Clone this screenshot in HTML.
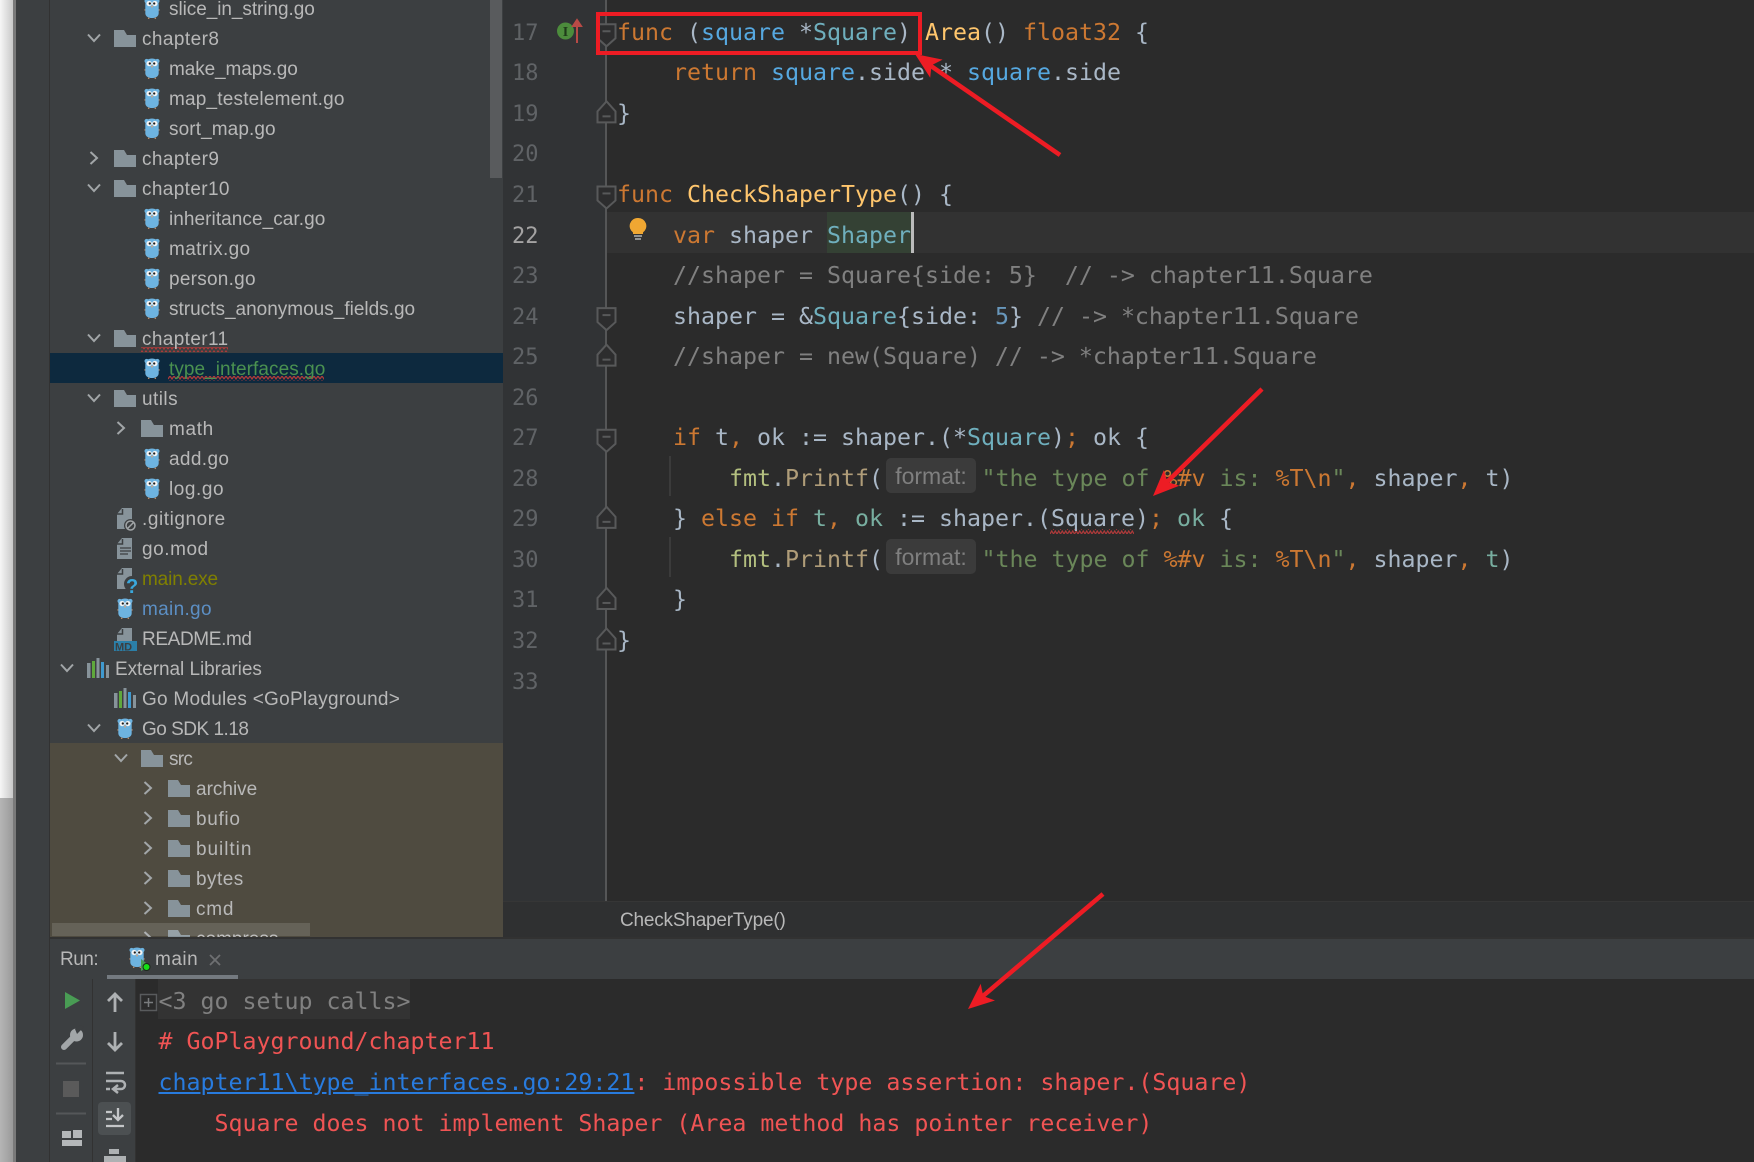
<!DOCTYPE html>
<html><head><meta charset="utf-8"><title>GoLand</title>
<style>
html,body{margin:0;padding:0;width:1754px;height:1162px;overflow:hidden;background:#2b2b2b}
.a{position:absolute}
#side{position:absolute;left:50px;top:0;width:453px;height:937px;background:#3c3f41;overflow:hidden}
.r{position:absolute;height:30px;margin-top:2px;font:19px/30px "Liberation Sans",sans-serif;color:#b8b8b8;white-space:pre}
pre{position:absolute;margin:3.5px 0 0;font:23.25px/40.55px "DejaVu Sans Mono","Liberation Mono",monospace;color:#a9b7c6;white-space:pre}
.ln{color:#606366;left:512px;font-size:22px;margin-top:4.5px}
.cd{left:617px}
.k{color:#cc7832}.f{color:#ffc66d}.v{color:#56a8e0}.y{color:#6fafbd}.s{color:#6a8759}.c{color:#808080}.n{color:#6897bb}.g{color:#b3bf7f}.p{color:#b09d79}.t{color:#78aea0}
.inl{position:absolute;left:886px;width:90px;height:35px;background:#3b3b3b;border-radius:5px;color:#7f7f7f;font:23px/37px "Liberation Sans",sans-serif;text-align:center}
.con{left:158.5px}
.rd{color:#f05454}
.lk{color:#287bde;text-decoration:underline}
</style></head><body>

<!-- left desktop edge -->
<div class="a" style="left:0;top:0;width:13px;height:798px;background:linear-gradient(90deg,#f6f6f6,#c9c9c9)"></div>
<div class="a" style="left:0;top:798px;width:13px;height:364px;background:linear-gradient(90deg,#b5b5b5,#9a9a9a)"></div>
<div class="a" style="left:13px;top:0;width:3px;height:1162px;background:#7a7a7a"></div>
<div class="a" style="left:16px;top:0;width:34px;height:1162px;background:#3c3f41"></div>
<div class="a" style="left:49px;top:0;width:1px;height:1162px;background:#323232"></div>

<!-- gutter + editor backgrounds -->
<div class="a" style="left:503px;top:0;width:103px;height:902px;background:#313335"></div>
<div class="a" style="left:606px;top:0;width:1148px;height:902px;background:#2b2b2b"></div>
<div class="a" style="left:606px;top:212px;width:1148px;height:41px;background:#323232"></div>
<div class="a" style="left:827px;top:212px;width:84px;height:41px;background:#344134"></div>
<div class="a" style="left:911px;top:212px;width:2.5px;height:41px;background:#bbbbbb"></div>
<div class="a" style="left:669px;top:456px;width:1.5px;height:40px;background:#3b3b3b"></div>
<div class="a" style="left:669px;top:537px;width:1.5px;height:40px;background:#3b3b3b"></div>

<!-- sidebar -->
<div id="side">
<div class="a" style="left:0;top:353px;width:453px;height:30px;background:#0d293e"></div>
<div class="a" style="left:0;top:743px;width:453px;height:194px;background:#4f4b40"></div>
<div class="a" style="left:440px;top:0;width:12px;height:178px;background:#595b5d"></div>
<svg class="a" style="left:-50px;top:0" width="503" height="937" viewBox="0 0 503 937">
<defs>
<symbol id="go" viewBox="0 0 16 22" overflow="visible">
<circle cx="2.400" cy="3.200" r="2.300" fill="#6db3e0"/><circle cx="13.600" cy="3.200" r="2.300" fill="#6db3e0"/>
<path d="M0 12.500h2M14 12.500h2M4.500 20.500v1.500M11.500 20.500v1.500" stroke="#b58a6a" stroke-width="1.500"/>
<path d="M1 6.500C1 2.500 4.500 .5 8 .5s7 2 7 6V16c0 3.500-3.500 5-7 5s-7-1.500-7-5z" fill="#6db3e0"/>
<circle cx="5" cy="5.800" r="2.800" fill="#f4f4f4"/><circle cx="11" cy="5.800" r="2.800" fill="#f4f4f4"/>
<circle cx="5.700" cy="5.800" r="1.200" fill="#1c1c1c"/><circle cx="10.300" cy="5.800" r="1.200" fill="#1c1c1c"/>
<rect x="7" y="8" width="2" height="1.800" fill="#c9a58a"/>
</symbol>
<g id="fd"><path d="M0 0h10l3 5h9v12H0z" fill="#87939a"/></g>
<g id="cd"><path d="M-6-3.500L0 3l6-6.500" fill="none" stroke="#a2a6a8" stroke-width="2"/></g>
<g id="cr"><path d="M-3.500-6L3 0l-6.500 6" fill="none" stroke="#a2a6a8" stroke-width="2"/></g>
<g id="fl"><path d="M5 0h10v21H0V6z" fill="#87939a"/><path d="M5.500 1v5H0" fill="none" stroke="#3c3f41" stroke-width="1.500"/></g>
<g id="lb"><rect x="0" y="5" width="3.500" height="15" fill="#87939a"/><rect x="5" y="3" width="3" height="17" fill="#5fa83c"/><rect x="9.500" y="0" width="3" height="20" fill="#87939a"/><rect x="14" y="4" width="3" height="16" fill="#3f9ad0"/><rect x="19" y="7" width="3" height="13" fill="#87939a"/></g>
<pattern id="wv" width="8" height="5" patternUnits="userSpaceOnUse"><path d="M0 4L2 1L4 4L6 1L8 4" fill="none" stroke="#b03a3a" stroke-width="1.200"/></pattern>
</defs>
<use href="#go" x="144" y="-2" width="16" height="21"/>
<use href="#cd" x="94" y="38"/><use href="#fd" x="114" y="30"/>
<use href="#go" x="144" y="58" width="16" height="21"/>
<use href="#go" x="144" y="88" width="16" height="21"/>
<use href="#go" x="144" y="118" width="16" height="21"/>
<use href="#cr" x="94" y="158"/><use href="#fd" x="114" y="150"/>
<use href="#cd" x="94" y="188"/><use href="#fd" x="114" y="180"/>
<use href="#go" x="144" y="208" width="16" height="21"/>
<use href="#go" x="144" y="238" width="16" height="21"/>
<use href="#go" x="144" y="268" width="16" height="21"/>
<use href="#go" x="144" y="298" width="16" height="21"/>
<use href="#cd" x="94" y="338"/><use href="#fd" x="114" y="330"/>
<use href="#go" x="144" y="358" width="16" height="21"/>
<use href="#cd" x="94" y="398"/><use href="#fd" x="114" y="390"/>
<use href="#cr" x="121" y="428"/><use href="#fd" x="141" y="420"/>
<use href="#go" x="144" y="448" width="16" height="21"/>
<use href="#go" x="144" y="478" width="16" height="21"/>
<use href="#fl" x="117" y="508"/><circle cx="130.500" cy="525.500" r="6.500" fill="#3c3f41"/><circle cx="130.500" cy="525.500" r="4.500" fill="#3c3f41" stroke="#a2a6a8" stroke-width="1.500"/><path d="M127.500 528.500l6-6" stroke="#a2a6a8" stroke-width="1.500"/>
<use href="#fl" x="117" y="538"/><path d="M120 548h11M120 551h11M120 554h8" stroke="#3c3f41" stroke-width="1.300"/>
<use href="#fl" x="117" y="568"/><circle cx="132" cy="584" r="8" fill="#3c3f41"/><text x="126" y="593" font-family="Liberation Sans" font-size="20" font-weight="bold" fill="#3aa8dc">?</text>
<use href="#go" x="117" y="598" width="16" height="21"/>
<use href="#fl" x="117" y="628"/><rect x="114" y="641" width="23" height="10" fill="#2b7fa8"/><text x="115" y="650.500" font-family="Liberation Sans" font-size="11" font-weight="bold" fill="#3c3f41">MD</text>
<use href="#cd" x="67" y="668"/><use href="#lb" x="87" y="658"/>
<use href="#lb" x="114" y="688"/>
<use href="#cd" x="94" y="728"/><use href="#go" x="117" y="718" width="16" height="21"/>
<use href="#cd" x="121" y="758"/><use href="#fd" x="141" y="750"/>
<use href="#cr" x="148" y="788"/><use href="#fd" x="168" y="780"/>
<use href="#cr" x="148" y="818"/><use href="#fd" x="168" y="810"/>
<use href="#cr" x="148" y="848"/><use href="#fd" x="168" y="840"/>
<use href="#cr" x="148" y="878"/><use href="#fd" x="168" y="870"/>
<use href="#cr" x="148" y="908"/><use href="#fd" x="168" y="900"/>
<use href="#cr" x="148" y="938"/><use href="#fd" x="168" y="930"/>
<rect x="141" y="347" width="87" height="5" fill="url(#wv)"/>
<rect x="168" y="376" width="156" height="5" fill="url(#wv)"/>
</svg>
<div class="r" style="left:119px;top:-7px;letter-spacing:-.06px">slice_in_string.go</div>
<div class="r" style="left:92px;top:23px;letter-spacing:.42px">chapter8</div>
<div class="r" style="left:119px;top:53px;letter-spacing:-.1px">make_maps.go</div>
<div class="r" style="left:119px;top:83px;letter-spacing:.19px">map_testelement.go</div>
<div class="r" style="left:119px;top:113px;letter-spacing:.1px">sort_map.go</div>
<div class="r" style="left:92px;top:143px;letter-spacing:.42px">chapter9</div>
<div class="r" style="left:92px;top:173px;letter-spacing:.37px">chapter10</div>
<div class="r" style="left:119px;top:203px;letter-spacing:.06px">inheritance_car.go</div>
<div class="r" style="left:119px;top:233px;letter-spacing:.37px">matrix.go</div>
<div class="r" style="left:119px;top:263px;letter-spacing:.25px">person.go</div>
<div class="r" style="left:119px;top:293px">structs_anonymous_fields.go</div>
<div class="r" style="left:92px;top:323px;letter-spacing:.37px">chapter11</div>
<div class="r" style="left:119px;top:353px;color:#4a9150;letter-spacing:.06px">type_interfaces.go</div>
<div class="r" style="left:92px;top:383px;letter-spacing:.45px">utils</div>
<div class="r" style="left:119px;top:413px;letter-spacing:.67px">math</div>
<div class="r" style="left:119px;top:443px;letter-spacing:.37px">add.go</div>
<div class="r" style="left:119px;top:473px;letter-spacing:.55px">log.go</div>
<div class="r" style="left:92px;top:503px;letter-spacing:.56px">.gitignore</div>
<div class="r" style="left:92px;top:533px;letter-spacing:.55px">go.mod</div>
<div class="r" style="left:92px;top:563px;color:#808000;letter-spacing:-.14px">main.exe</div>
<div class="r" style="left:92px;top:593px;color:#5c8fc4;letter-spacing:.32px">main.go</div>
<div class="r" style="left:92px;top:623px;letter-spacing:-.37px">README.md</div>
<div class="r" style="left:65px;top:653px;letter-spacing:-.06px">External Libraries</div>
<div class="r" style="left:92px;top:683px;letter-spacing:.27px">Go Modules &lt;GoPlayground&gt;</div>
<div class="r" style="left:92px;top:713px;letter-spacing:-.5px">Go SDK 1.18</div>
<div class="r" style="left:119px;top:743px;letter-spacing:-.75px">src</div>
<div class="r" style="left:146px;top:773px">archive</div>
<div class="r" style="left:146px;top:803px;letter-spacing:.67px">bufio</div>
<div class="r" style="left:146px;top:833px;letter-spacing:.96px">builtin</div>
<div class="r" style="left:146px;top:863px;letter-spacing:.45px">bytes</div>
<div class="r" style="left:146px;top:893px;letter-spacing:.75px">cmd</div>
<div class="r" style="left:146px;top:923px">compress</div>
<div class="a" style="left:2px;top:923px;width:258px;height:13px;background:rgba(255,255,255,.13)"></div>
</div>

<!-- gutter art -->
<svg class="a" style="left:0;top:0" width="1754" height="902" viewBox="0 0 1754 902">
<defs>
<g id="fo"><path d="M597.500 15h18v14l-9 8l-9-8z" fill="#2d2d2e" stroke="#58595a" stroke-width="2"/><path d="M602.500 22h8" stroke="#58595a" stroke-width="2"/></g>
<g id="fc"><path d="M606.500 11l9 10v11h-18v-11z" fill="#2d2d2e" stroke="#58595a" stroke-width="2"/><path d="M602.500 26h8" stroke="#58595a" stroke-width="2"/></g>
<pattern id="wv2" width="7" height="5" patternUnits="userSpaceOnUse"><path d="M0 4L1.750 1L3.500 4L5.250 1L7 4" fill="none" stroke="#b03a3a" stroke-width="1.200"/></pattern>
</defs>
<path d="M606 0V902" stroke="#555657" stroke-width="2"/>
<use href="#fo" y="9.250"/><use href="#fc" y="90.350"/><use href="#fo" y="171.450"/>
<use href="#fo" y="293.100"/><use href="#fc" y="333.650"/><use href="#fo" y="414.750"/>
<use href="#fc" y="495.850"/><use href="#fc" y="576.950"/><use href="#fc" y="617.500"/>
<circle cx="565.500" cy="31" r="8.500" fill="#4c8c3c"/>
<text x="565.500" y="36" font-family="Liberation Serif" font-size="14" font-weight="bold" text-anchor="middle" fill="#1f3a1a">I</text>
<path d="M577 43V21M573 26l4-6l4 6z" stroke="#b84a46" stroke-width="2" fill="#b84a46"/>
<path d="M638 218a8 8 0 0 1 5 14.500V234h-10v-1.500A8 8 0 0 1 638 218z" fill="#f0a732"/>
<path d="M634 236h8M635 239h6" stroke="#afb1b3" stroke-width="1.500"/>
<rect x="1050" y="529" width="84" height="5" fill="url(#wv2)"/>
</svg>

<!-- line numbers -->
<pre class="ln" style="top:9.250px">17</pre>
<pre class="ln" style="top:49.800px">18</pre>
<pre class="ln" style="top:90.350px">19</pre>
<pre class="ln" style="top:130.900px">20</pre>
<pre class="ln" style="top:171.450px">21</pre>
<pre class="ln" style="top:212px;color:#a4a3a3">22</pre>
<pre class="ln" style="top:252.550px">23</pre>
<pre class="ln" style="top:293.100px">24</pre>
<pre class="ln" style="top:333.650px">25</pre>
<pre class="ln" style="top:374.200px">26</pre>
<pre class="ln" style="top:414.750px">27</pre>
<pre class="ln" style="top:455.300px">28</pre>
<pre class="ln" style="top:495.850px">29</pre>
<pre class="ln" style="top:536.400px">30</pre>
<pre class="ln" style="top:576.950px">31</pre>
<pre class="ln" style="top:617.500px">32</pre>
<pre class="ln" style="top:658.050px">33</pre>

<!-- code -->
<pre class="cd" style="top:9.250px"><span class="k">func</span> (<span class="v">square</span> *<span class="y">Square</span>) <span class="f">Area</span>() <span class="k">float32</span> {</pre>
<pre class="cd" style="top:49.800px">    <span class="k">return</span> <span class="v">square</span>.side * <span class="v">square</span>.side</pre>
<pre class="cd" style="top:90.350px">}</pre>
<pre class="cd" style="top:171.450px"><span class="k">func</span> <span class="f">CheckShaperType</span>() {</pre>
<pre class="cd" style="top:212px">    <span class="k">var</span> shaper <span class="y">Shaper</span></pre>
<pre class="cd c" style="top:252.550px">    //shaper = Square{side: 5}  // -&gt; chapter11.Square</pre>
<pre class="cd" style="top:293.100px">    shaper = &amp;<span class="y">Square</span>{side: <span class="n">5</span>} <span class="c">// -&gt; *chapter11.Square</span></pre>
<pre class="cd c" style="top:333.650px">    //shaper = new(Square) // -&gt; *chapter11.Square</pre>
<pre class="cd" style="top:414.750px">    <span class="k">if</span> t<span class="k">,</span> ok := shaper.(*<span class="y">Square</span>)<span class="k">;</span> ok {</pre>
<pre class="cd" style="top:455.300px">        <span class="g">fmt</span>.<span class="p">Printf</span>(</pre>
<div class="inl" style="top:458px">format:</div>
<pre style="left:981.500px;top:455.300px"><span class="s">"the type of </span><span class="k">%#v</span><span class="s"> is: </span><span class="k">%T\n</span><span class="s">"</span><span class="k">,</span> shaper<span class="k">,</span> t)</pre>
<pre class="cd" style="top:495.850px">    } <span class="k">else if</span> <span class="t">t</span><span class="k">,</span> <span class="t">ok</span> := shaper.(Square)<span class="k">;</span> <span class="t">ok</span> {</pre>
<pre class="cd" style="top:536.400px">        <span class="g">fmt</span>.<span class="p">Printf</span>(</pre>
<div class="inl" style="top:539px">format:</div>
<pre style="left:981.500px;top:536.400px"><span class="s">"the type of </span><span class="k">%#v</span><span class="s"> is: </span><span class="k">%T\n</span><span class="s">"</span><span class="k">,</span> shaper<span class="k">,</span> <span class="t">t</span>)</pre>
<pre class="cd" style="top:576.950px">    }</pre>
<pre class="cd" style="top:617.500px">}</pre>

<!-- breadcrumb -->
<div class="a" style="left:503px;top:901px;width:1251px;height:37px;background:#2f3031;border-top:1px solid #363636;box-sizing:border-box"></div>
<div class="r" style="left:620px;top:904px;color:#b8b8b8;letter-spacing:-.2px">CheckShaperType()</div>

<!-- run tab bar -->
<div class="a" style="left:50px;top:937px;width:1704px;height:42px;background:#3c3f41;border-top:2px solid #323232;box-sizing:border-box"></div>
<div class="a" style="left:107px;top:975px;width:131px;height:4px;background:#747a80"></div>
<div class="r" style="left:60px;top:943px;letter-spacing:-.5px">Run:</div>
<div class="r" style="left:155px;top:943px;letter-spacing:.5px">main</div>
<svg class="a" style="left:125px;top:945px" width="100" height="28" viewBox="0 0 100 28">
<use href="#go" x="4" y="2" width="16" height="21"/>
<path d="M16 14l9 7l-9 5z" fill="#499c54"/><circle cx="21.500" cy="22" r="3.500" fill="#14e014" stroke="#1a2a1a" stroke-width="1"/>
<path d="M85 10l10 10M95 10l-10 10" stroke="#6e7072" stroke-width="1.800"/>
</svg>

<!-- console -->
<div class="a" style="left:50px;top:979px;width:43px;height:183px;background:#3c3f41;border-right:1px solid #323232;box-sizing:border-box"></div>
<div class="a" style="left:93px;top:979px;width:43px;height:183px;background:#3c3f41;border-right:1px solid #323232;box-sizing:border-box"></div>
<div class="a" style="left:158px;top:979px;width:252px;height:40px;background:#333333"></div>
<svg class="a" style="left:50px;top:979px" width="110" height="183" viewBox="0 0 110 183">
<path d="M15 13l15 8.500l-15 8.500z" fill="#499c54"/>
<path d="M14 68L25 57" stroke="#a2a6a8" stroke-width="6" stroke-linecap="round"/>
<circle cx="26.500" cy="56" r="6.500" fill="#a2a6a8"/>
<path d="M27 55L34 48L30 46L25 50z" fill="#3c3f41"/>
<path d="M6 84.500h30M6 134.500h30" stroke="#555759" stroke-width="2"/>
<rect x="13" y="102" width="16" height="16" fill="#5a5a5a"/>
<path d="M12 152h9v7h-9zM23 151h9v8h-9zM12 161h20v6H12z" fill="#b4b7b9"/>
<path d="M65 33V15M58 22l7-7l7 7" fill="none" stroke="#aeb1b3" stroke-width="2.800"/>
<path d="M65 53v18M58 64l7 7l7-7" fill="none" stroke="#aeb1b3" stroke-width="2.800"/>
<path d="M56 94h18M56 102h15a4 4 0 0 1 0 8h-7M56 110h4M68 106l-5 4l5 4" fill="none" stroke="#aeb1b3" stroke-width="2.500"/>
<rect x="48" y="123" width="33" height="33" rx="4" fill="#4c5052"/>
<path d="M56 133h6M56 140h6M56 147h18M68 129v12M63 136l5 5l5-5" fill="none" stroke="#c4c6c8" stroke-width="2.300"/>
<path d="M59 170h10v5h-10zM54 177h22v6H54z" fill="#aeb1b3"/>
</svg>
<svg class="a" style="left:137px;top:991px" width="22" height="22" viewBox="0 0 22 22">
<rect x="3.500" y="3.500" width="16" height="16" fill="none" stroke="#595b5d" stroke-width="1.500"/>
<path d="M7 11.500h9M11.500 7v9" stroke="#7a7c7e" stroke-width="1.500"/>
</svg>
<pre class="con c" style="top:978px">&lt;3 go setup calls&gt;</pre>
<pre class="con rd" style="top:1018.500px"># GoPlayground/chapter11</pre>
<pre class="con rd" style="top:1059px"><span class="lk">chapter11\type_interfaces.go:29:21</span>: impossible type assertion: shaper.(Square)</pre>
<pre class="con rd" style="top:1100px">    Square does not implement Shaper (Area method has pointer receiver)</pre>

<!-- annotations -->
<div class="a" style="left:596px;top:12px;width:326px;height:43px;border:4px solid #ed1c24;box-sizing:border-box"></div>
<svg class="a" style="left:0;top:0" width="1754" height="1162" viewBox="0 0 1754 1162">
<g fill="#ed1c24" stroke="#ed1c24">
<path d="M1060 155L931 66" stroke-width="4.500" fill="none"/>
<polygon stroke="none" points="915,54 942.600,59.600 931.500,65.300 930.200,77.800"/>
<path d="M1262 389L1167 482" stroke-width="4.500" fill="none"/>
<polygon stroke="none" points="1153,496 1179.300,485.700 1167.300,482 1163.900,470"/>
<path d="M1103 894L983 996" stroke-width="4.500" fill="none"/>
<polygon stroke="none" points="968,1009 995,1000.500 983.200,996 980.700,983.700"/>
</g>
</svg>
</body></html>
